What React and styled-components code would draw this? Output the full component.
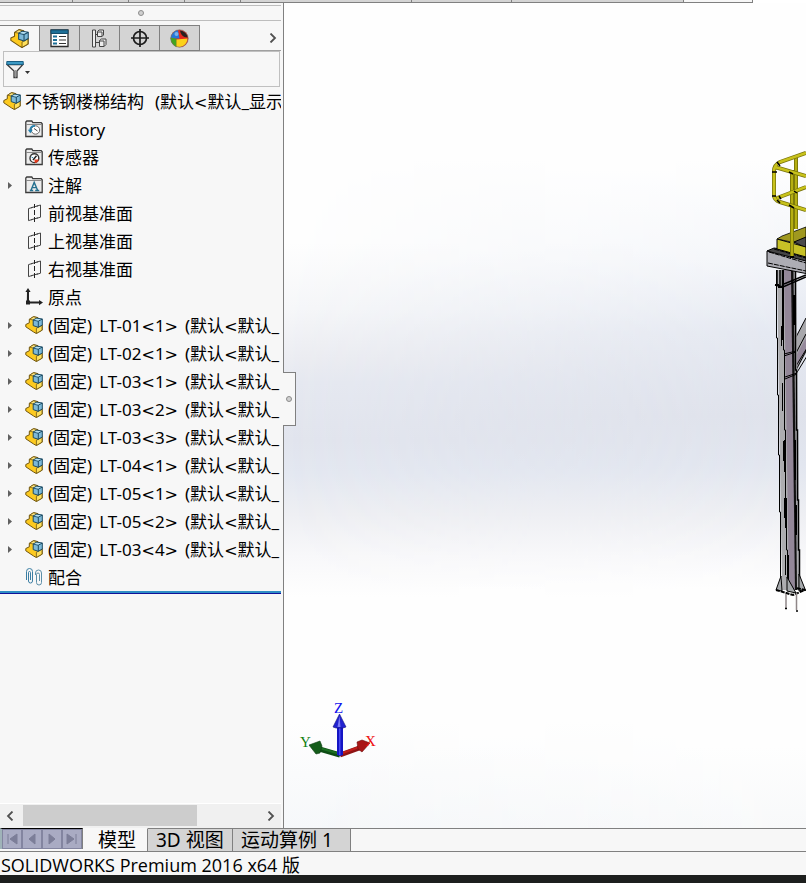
import React from "react";
import styled, { createGlobalStyle } from "styled-components";

const GlobalStyle = createGlobalStyle`
  * {
    box-sizing: border-box;
  }
  body {
    margin: 0;
    background: #f7f7f7;
    color: #000;
    font-family: "Noto Sans", "Noto Sans CJK SC", sans-serif;
    font-size: 17px;
  }
  button, input {
    font: inherit;
    color: inherit;
    margin: 0;
    padding: 0;
    border: 0;
    border-radius: 0;
    background: none;
  }
  svg {
    display: block;
    flex: none;
  }
`;

const Window = styled.div`
  display: flex;
  flex-direction: column;
  height: 100vh;
  min-height: 700px;
  overflow: hidden;
`;

const Ribbon = styled.div`
  display: flex;
  height: 3px;
  background: #fff;
`;

const RibbonTab = styled.div`
  width: ${(p) => p.$width}px;
  background: ${(p) => (p.$active ? "#f7f7f7" : "#d4d4d4")};
  border-right: 1px solid #808080;
  border-bottom: 1px solid #808080;
`;

const Main = styled.main`
  display: flex;
  flex: 1;
  min-height: 0;
`;

const Panel = styled.aside`
  position: relative;
  display: flex;
  flex-direction: column;
  flex: none;
  width: 284px;
  padding-right: 2px;
  border-right: 1px solid #808080;
  background: #f7f7f7;
`;

const Splitter = styled.div`
  display: flex;
  align-items: center;
  justify-content: center;
  height: 16px;
  margin-top: 2px;
  border-top: 1px solid #bdbdbd;
  border-bottom: 1px solid #bdbdbd;
`;

const Grip = styled.span`
  width: 6px;
  height: 6px;
  border: 1px solid #8c8c8c;
  border-radius: 50%;
  background: #d0d0d0;
`;

const PanelTabs = styled.div`
  display: flex;
  height: 26px;
  margin-top: 4px;
  border-bottom: 1px solid #a0a0a0;
`;

const PanelTab = styled.button`
  display: flex;
  align-items: center;
  justify-content: center;
  width: 40px;
  height: 26px;
  background: ${(p) => (p.$active ? "#f7f7f7" : "#d4d4d4")};
  border-top: 1px solid #808080;
  border-right: 1px solid #808080;
  border-bottom: ${(p) => (p.$active ? "0" : "1px solid #808080")};
`;

const MoreButton = styled.button`
  display: flex;
  align-items: center;
  justify-content: center;
  width: 16px;
  margin-left: auto;
`;

const FilterBar = styled.div`
  display: flex;
  align-items: center;
  height: 36px;
  margin: 0 1px 0 3px;
  border: 1px solid #c0c0c0;
`;

const FilterButton = styled.button`
  display: flex;
  align-items: center;
  gap: 1px;
  width: 28px;
  padding-left: 2px;
`;

const FilterInput = styled.input`
  flex: 1;
  min-width: 0;
  height: 30px;
  outline: none;
`;

const Tree = styled.ul`
  flex: 1;
  min-height: 0;
  margin: 0;
  padding: 0;
  overflow: hidden;
  list-style: none;
`;

const TreeRow = styled.li`
  display: flex;
  align-items: center;
  height: 28px;
  padding-left: ${(p) => (p.$root ? 3 : 0)}px;
  white-space: pre;
  overflow: hidden;
`;

const Expander = styled.button`
  display: flex;
  align-items: center;
  width: 25px;
  height: 28px;
  padding-left: 8px;
  flex: none;
`;

const Indent = styled.span`
  width: 25px;
  flex: none;
`;

const Label = styled.span`
  display: flex;
  gap: ${(p) => (p.$root ? 11 : 7)}px;
  padding-top: 2px;
  padding-left: ${(p) => (p.$root ? 4 : 5)}px;
  line-height: 28px;
`;

const Angle = styled.span`
  font-family: "DejaVu Sans", sans-serif;
  font-size: 16px;
  line-height: 1;
`;

const Rollback = styled.li`
  height: 3px;
  background: #2f8fc4;
  border-bottom: 1px solid #10109a;
`;

const ScrollBar = styled.div`
  display: flex;
  height: 25px;
  padding: 1px 0 2px;
  border-top: 1px solid #fff;
  background: #f0f0f0;
`;

const ScrollButton = styled.button`
  display: flex;
  align-items: center;
  justify-content: center;
  width: 20px;
`;

const ScrollTrack = styled.div`
  flex: 1;
  padding-left: 3px;
`;

const ScrollThumb = styled.div`
  width: 73%;
  height: 100%;
  background: #cdcdcd;
`;

const CollapseHandle = styled.button`
  position: absolute;
  top: 369px;
  left: 283px;
  z-index: 1;
  display: flex;
  align-items: center;
  justify-content: center;
  width: 13px;
  height: 54px;
  border: 1px solid #808080;
  border-left: 0;
  background: #f7f7f7;
`;

const Viewport = styled.section`
  position: relative;
  flex: 1;
  min-width: 0;
  overflow: hidden;
  background: linear-gradient(
    #fefefe 29%,
    #f6f7f9 37%,
    #ecedf2 43%,
    #e6e9f1 46%,
    #e2e5ee 53%,
    #e4e8f1 57%,
    #eeeff3 62%,
    #f8f8fa 67%,
    #fefefe 72%,
    #fefefe 87%,
    #f6f8fa 100%
  );

  &::before {
    content: "";
    position: absolute;
    inset: 0;
    background: linear-gradient(
      #fefefe 19%,
      #f3f5f9 31%,
      #e4e8f1 40%,
      #dfe2eb 50%,
      #e2e6ef 56%,
      #eeeff3 62%,
      #f8f8fa 67%,
      #fefefe 71%,
      #fefefe 90%,
      #f8f9fa 100%
    );
    mask-image: linear-gradient(to right, transparent, #000);
  }
`;

const Model = styled.svg`
  position: absolute;
  top: 137px;
  right: 0;
`;

const Triad = styled.svg`
  position: absolute;
  bottom: 58px;
  left: 6px;
  font-family: "Liberation Serif", serif;
  font-size: 15px;
`;

const BottomBar = styled.nav`
  display: flex;
  height: 24px;
  background: #f7f7f7;
  border-bottom: 1px solid #808080;
`;

const Recorder = styled.div`
  display: flex;
  height: 21px;
  width: 83px;
  border-top: 1px solid #000;
  border-left: 2px solid #9fb3b8;
  border-right: 1px solid #808080;
`;

const RecorderButton = styled.button`
  display: flex;
  align-items: center;
  justify-content: center;
  flex: 1;
  background: #a9abc3;
  border: 1px solid #8385a0;
`;

const ViewTab = styled.button`
  width: ${(p) => p.$width}px;
  padding-left: ${(p) => (p.$active ? 15 : 8)}px;
  background: ${(p) => (p.$active ? "#f7f7f7" : "#d4d4d4")};
  border-top: 1px solid ${(p) => (p.$active ? "#f7f7f7" : "#808080")};
  border-right: 1px solid #808080;
  font-size: 19px;
  line-height: 23px;
  text-align: left;
  white-space: nowrap;
`;

const BarFill = styled.div`
  flex: 1;
  border-top: 1px solid #808080;
`;

const StatusBar = styled.footer`
  height: 31px;
  padding-left: 1px;
  border-bottom: 8px solid #1d1f1e;
  background: #f7f7f7;
  font-family: "Open Sans", "Noto Sans CJK SC", sans-serif;
  font-size: 18px;
  line-height: 26px;
  white-space: nowrap;
`;

function PartIcon({ size = 18 }) {
  return (
    <svg width={size} height={size} viewBox="0 0 18 18" strokeLinejoin="round">
      <path d="M.8 8.500 4.300 6.800V3.300L8.500.6l4.500 1v8l4.200-.8v5.400L11.300 17.500 8.600 16 .8 10.800z" fill="#fdca1f" stroke="#6f5510" />
      <path d="M4.500 3.300 8.500.8l4 1L9 4z" fill="#fbe27d" stroke="#6f5510" strokeWidth=".7" />
      <path d="M11.400 12.300 17 9.200v5l-5.600 3.200z" fill="#ffe05c" stroke="#6f5510" strokeWidth=".8" />
      <path d="m8.200 4 3.400-1.800L17.300 3v6l-4 2.300L8.200 9.600z" fill="#7db9d8" stroke="#1b4a63" />
      <path d="m8.200 4 5.100 1.200v6M13.300 5.200 17.300 3" fill="none" stroke="#1b4a63" />
      <path d="m9.200 3.900 2.600-1.200 4 .5-2.600 1.300z" fill="#b7dff0" />
    </svg>
  );
}

function Folder({ children }) {
  return (
    <svg width="18" height="18" viewBox="0 0 18 18">
      <path d="M.8 16.500V2L1.800 1h5l1 1.600h8.400l1 1.200v12.700z" fill="#ececec" stroke="#3c3c3c" strokeWidth="1.300" />
      <path d="M1 4.500h16" stroke="#8a8a8a" />
      {children}
    </svg>
  );
}

function HistoryIcon() {
  return (
    <Folder>
      <circle cx="10.500" cy="10" r="4.200" fill="#fff" stroke="#666" />
      <path d="M9 8.500 12.500 11" fill="none" stroke="#444" />
      <path d="M10 5.800c-3.500 0-4.800 2-4.800 4.800" fill="none" stroke="#2580ad" strokeWidth="1.800" />
      <path d="M2.800 9.800h5L5.400 13.300z" fill="#2580ad" />
    </Folder>
  );
}

function SensorIcon() {
  return (
    <Folder>
      <circle cx="9.400" cy="10.200" r="4.400" fill="#fff" stroke="#333" strokeWidth="1.400" />
      <path d="M9.400 11.400h4.400a4.400 4.400 0 0 1-4 3.600z" fill="#e33b1d" />
      <path d="m8 12 3.500-4.200" stroke="#222" strokeWidth="1.500" />
      <path d="m6.500 9 1.800 1" stroke="#2580ad" />
    </Folder>
  );
}

function AnnotationIcon() {
  return (
    <Folder>
      <path d="M4.800 14.500h3.400M10.200 14.500h4M6 14.200 9.200 6.400l3.400 7.800M7.400 11.600h4" fill="none" stroke="#24708f" strokeWidth="1.400" />
    </Folder>
  );
}

function PlaneIcon() {
  return (
    <svg width="18" height="18" viewBox="0 0 18 18" fill="none" stroke="#444">
      <path d="M7.500 3.400 3.500 4.600v12l4-1.200M11.500 2.200l4-1.200v12.200l-4 1.200" />
      <path d="m6 3.800 7-2M6 15.800l7-2" />
      <path d="M9.500 0v4M9.500 6v5M9.500 13v5" stroke="#222" />
    </svg>
  );
}

function OriginIcon() {
  return (
    <svg width="18" height="18" viewBox="0 0 18 18" fill="#222">
      <path d="M2 3h2v10.500h10v2H1.800z" />
      <path d="m3 0 2.600 4H.4zM18 14.600l-4 2.600V12zM1 12.600h4v4H1z" />
    </svg>
  );
}

function MatesIcon() {
  return (
    <svg width="18" height="18" viewBox="0 0 18 18" fill="none" stroke="#3b7ea3">
      <path d="M1.500 12V3.500a3 3 0 0 1 6 0V13a2 2 0 0 1-4 0V4.500a1 1 0 0 1 2 0V12" />
      <path d="M10.500 7V5a3 3 0 0 1 6 0v9.500a2.500 2.500 0 0 1-5 0V6.500a1.500 1.500 0 0 1 3 0V13" stroke="#5d8fa8" />
    </svg>
  );
}

function PropertiesIcon() {
  return (
    <svg width="19" height="19" viewBox="0 0 19 19" fill="none">
      <path d="M1 1h17v16.500H1z" fill="#fff" stroke="#2c2c2c" strokeWidth="1.300" />
      <path d="M1 1h17v3.500H1z" fill="#1d6f97" stroke="#164d6a" />
      <path d="M3 7.500h4M3 11h4M3 14.500h4" stroke="#1d6f97" strokeWidth="2" />
      <path d="M9 7.500h7M9 11h7M9 14.500h7" stroke="#333" />
    </svg>
  );
}

function ConfigIcon() {
  return (
    <svg width="17" height="19" viewBox="0 0 17 19" fill="#ededed" stroke="#444">
      <path d="M1.500 1h3v17h-3z" />
      <path d="M4.500 5.500h2M4.500 13.500h4" fill="none" />
      <path d="M6.500 2.500 8 1h4.500v5L11 7.500H6.500z" />
      <path d="M6.500 3h4.500v4.500" fill="none" />
      <path d="M8.500 11.500 10.500 10H15v5.500L13 17.500H8.500z" />
      <path d="M8.500 12h4.500v5.500" fill="none" />
    </svg>
  );
}

function TargetIcon() {
  return (
    <svg width="20" height="20" viewBox="0 0 20 20" fill="none" stroke="#1c1c1c" strokeWidth="1.700">
      <circle cx="10" cy="10" r="6.500" />
      <path d="M10 1v18M1 10h18" />
    </svg>
  );
}

function AppearanceIcon() {
  return (
    <svg width="19" height="19" viewBox="0 0 19 19">
      <circle cx="9.500" cy="9.500" r="8.800" fill="#e5281d" />
      <path d="M9.500 9.500.7 9.500A8.800 8.800 0 0 1 8 .9z" fill="#2677d8" />
      <path d="M.7 8.500l6 1.500 0 8A8.800 8.800 0 0 1 .7 8.500z" fill="#43a51f" />
      <path d="M6.500 10.500 17.500 9.500A8.800 8.800 0 0 1 6.500 17.800z" fill="#fbd21b" />
      <path d="M10 1.500c3 0 7 3 8 7l-3.500-.5C12 7 10.500 4.500 10 1.500z" fill="#29201f" />
      <circle cx="6.500" cy="5" r="2" fill="#9cc8f5" opacity=".7" />
      <circle cx="9.500" cy="9.500" r="8.700" fill="none" stroke="#75706c" strokeWidth=".6" />
    </svg>
  );
}

function FunnelIcon() {
  return (
    <svg width="18" height="19" viewBox="0 0 18 19">
      <path d="M1 4.500h16L11 11v6.500H8V11z" fill="#f0f0f0" stroke="#3c3c3c" strokeWidth="1.300" />
      <path d="M9.500 10v7.500" stroke="#999" />
      <path d="M.8 1.500h16.400v3H.8z" fill="#3d9ac4" stroke="#1a5f83" />
    </svg>
  );
}

function Chevron({ left }) {
  return (
    <svg width="8" height="10" viewBox="0 0 8 10" fill="none" stroke="#505050" strokeWidth="1.800">
      <path d={left ? "M6.500 .5 2 5l4.500 4.500" : "M1.500 .5 6 5 1.500 9.500"} />
    </svg>
  );
}

// platform leg with the guard rail on top
function StairModel() {
  const rail = "M60 13 34 22Q28 25 28 31V55Q28 60 34 62L60 70M29 27 60 36M31 58 60 47";
  return (
    <Model width="60" height="480" viewBox="0 0 60 480" role="img" aria-label="不锈钢楼梯结构">
      {/* brace */}
      <path d="M50 197 60 178V213L50 232z" fill="#a8a8ac" />
      <path d="M50 216 60 198V210L50 228z" fill="#968a9c" />
      <path d="M50 197 60 178M50 213 60 194M50 230 60 211M50 234 61 216M50 226 61 208" stroke="#000" fill="none" />
      {/* column */}
      <path d="M31 130H50L54 450H36z" fill="#adadb0" />
      <path d="M38 130H46L50.500 450H43z" fill="#938798" />
      <path d="M45 130h2.500L51 450h-2z" fill="#111" />
      <path d="M30.500 130v68h1v57h1v60h1v57h1v78M37.500 130v80h1v80h1v70h1v50h1v40" fill="none" stroke="#000" />
      <path d="M49.500 130v100h1v60h1v70h1v50h1v40" fill="none" stroke="#000" strokeWidth="1.500" />
      <path d="M35.500 186v20M36.500 243v28M37.500 301v20M38.500 358v20M39.500 415v20" stroke="#000" />
      <path d="M37 130v70M39 300v32M40 358v30M42 415v25M48 155v30M49 300v40M50 365v30" stroke="#000" strokeWidth="2" />
      <path d="m38 214 12-3M38 216l12-4M39 239l12-5M39 237l12-4" stroke="#000" />
      {/* base plate and anchor bolts */}
      <path d="M35 436 30 450 36 451zM41 437v14l9 2zM53 434l6 15-6 2z" fill="#a5a8ab" stroke="#000" />
      <path d="m30 450 17 5 12-5-9-2" fill="none" stroke="#000" strokeWidth="2" strokeDasharray="4 1" />
      <path d="M40 454v14M50.500 453v17" stroke="#8f8688" strokeWidth="1.500" />
      <path d="M39 468.500h2M50 471h2" stroke="#000" strokeWidth="1.500" />
      {/* column head */}
      <path d="M31 130v14M34 130v16M36.500 130v16M29 145l8 2 23-10M38 144l22-9" fill="none" stroke="#000" strokeWidth="1.500" />
      <path d="M29 145h4M32 147h4" stroke="#000" strokeWidth="2" />
      {/* deck */}
      <path d="M21 111 28 108 60 113V126z" fill="#454545" stroke="#000" />
      <path d="M21 111 60 121V133.500L21 126z" fill="#adadb4" stroke="#000" />
      <path d="M23 112 60 123M22 123l38 8M28 109l32 9" stroke="#000" fill="none" strokeDasharray="5 1" />
      <path d="M31 99 36 96 60 87V98L50 103z" fill="#9f9820" stroke="#000" strokeWidth=".8" />
      <path d="M48 102 60 97V108z" fill="#4a4a4a" stroke="#000" />
      <path d="M31 99 60 107V117L31 109z" fill="#c7c126" stroke="#000" />
      {/* guard rail */}
      <g fill="none">
        <path d="M50 18V89M46 30V117" stroke="#6d6a08" strokeWidth="4" />
        <path d="M50 18V89M46 30V117" stroke="#b5ae12" strokeWidth="2.500" />
        <path d={rail} stroke="#77720c" strokeWidth="4" />
        <path d={rail} stroke="#c8c21b" strokeWidth="2.500" />
        <path d="M31 22l3 4M26 32h5M26 56h4M31 60l3 3M43 32l4 2M33 56l2 3M48 51l3 2M43 65l5 3" stroke="#000" strokeWidth="1.500" />
      </g>
      <path d="M44 117h4" stroke="#000" strokeWidth="2" />
    </Model>
  );
}

function AxisTriad() {
  return (
    <Triad width="100" height="80" viewBox="0 0 100 80">
      <path d="M50 65 26 58" stroke="#0e4d14" strokeWidth="5" />
      <path d="M50 64 26 57" stroke="#1c6f22" strokeWidth="2" />
      <path d="m19 55 11-4 2 5-2 7-4 1z" fill="#145c1a" stroke="#0c3d10" strokeWidth=".6" />
      <path d="m50 65 22-8" stroke="#8e1414" strokeWidth="5" />
      <path d="m50 64 22-8" stroke="#c01c1c" strokeWidth="2" />
      <path d="m80 53-8-3-5 2 1 7 4 3z" fill="#a81616" stroke="#6a0c0c" strokeWidth=".6" />
      <path d="M47 37h6v28l-3 1-3-1z" fill="#1414c4" />
      <path d="M49 37h1.500v28H49z" fill="#4848f0" />
      <path d="m49.500 24 6.500 13-3 1h-7l-3-1z" fill="#2222d0" stroke="#10107a" strokeWidth=".6" />
      <path d="m49.500 26 1 11h-3z" fill="#7c7cf4" />
      <text x="44" y="23" fill="#1010ee">Z</text>
      <text x="10" y="57" fill="#108010">Y</text>
      <text x="75" y="56" fill="#ee1010">X</text>
    </Triad>
  );
}

const ribbonTabs = [73, 56, 56, 56, 171, 100, 172];

const features = [
  { label: ["History"], icon: <HistoryIcon /> },
  { label: ["传感器"], icon: <SensorIcon /> },
  { label: ["注解"], icon: <AnnotationIcon />, expandable: true },
  { label: ["前视基准面"], icon: <PlaneIcon /> },
  { label: ["上视基准面"], icon: <PlaneIcon /> },
  { label: ["右视基准面"], icon: <PlaneIcon /> },
  { label: ["原点"], icon: <OriginIcon /> },
];

const parts = ["01<1>", "02<1>", "03<1>", "03<2>", "03<3>", "04<1>", "05<1>", "05<2>", "03<4>"].map((name) => ({
  label: ["(固定)", `LT-${name}`, "(默认<默认_"],
  icon: <PartIcon />,
  expandable: true,
}));

const items = [...features, ...parts, { label: ["配合"], icon: <MatesIcon /> }];

const panelTabs = [
  { name: "FeatureManager", icon: <PartIcon size={19} />, active: true },
  { name: "PropertyManager", icon: <PropertiesIcon /> },
  { name: "ConfigurationManager", icon: <ConfigIcon /> },
  { name: "DimXpertManager", icon: <TargetIcon /> },
  { name: "DisplayManager", icon: <AppearanceIcon /> },
];

const recorder = [
  { name: "first", d: "M2 1v10M11 1v10L4 6z" },
  { name: "previous", d: "M9 1v10L3 6z" },
  { name: "next", d: "M3 1v10l6-5z" },
  { name: "last", d: "M10 1v10M1 1v10l7-5z" },
];

function TreeLabel({ words, root }) {
  return (
    <Label $root={root}>
      {words.map((word) => (
        <span key={word}>
          {word.split(/([<>])/).map((s, i) => (s === "<" || s === ">" ? <Angle key={i}>{s}</Angle> : s))}
        </span>
      ))}
    </Label>
  );
}

function App() {
  return (
    <Window>
      <GlobalStyle />
      <Ribbon>
        {ribbonTabs.map((width, i) => (
          <RibbonTab key={i} $width={width} />
        ))}
        <RibbonTab $width={69} $active />
      </Ribbon>
      <Main>
        <Panel>
          <Splitter>
            <Grip />
          </Splitter>
          <PanelTabs>
            {panelTabs.map((tab) => (
              <PanelTab key={tab.name} aria-label={tab.name} $active={tab.active}>
                {tab.icon}
              </PanelTab>
            ))}
            <MoreButton aria-label="more">
              <Chevron />
            </MoreButton>
          </PanelTabs>
          <FilterBar>
            <FilterButton aria-label="filter">
              <FunnelIcon />
              <svg width="5" height="9" viewBox="0 0 5 9">
                <path d="M0 6h5L2.500 9z" fill="#333" />
              </svg>
            </FilterButton>
            <FilterInput type="text" aria-label="filter text" />
          </FilterBar>
          <Tree>
            <TreeRow $root>
              <PartIcon />
              <TreeLabel root words={["不锈钢楼梯结构", "(默认<默认_显示"]} />
            </TreeRow>
            {items.map((item) => (
              <TreeRow key={item.label.join(" ")}>
                {item.expandable ? (
                  <Expander aria-label={`expand ${item.label.join(" ")}`}>
                    <svg width="4" height="7" viewBox="0 0 4 7">
                      <path d="M0 0v7l4-3.500z" fill="#606060" />
                    </svg>
                  </Expander>
                ) : (
                  <Indent />
                )}
                {item.icon}
                <TreeLabel words={item.label} />
              </TreeRow>
            ))}
            <Rollback />
          </Tree>
          <ScrollBar>
            <ScrollButton aria-label="scroll left">
              <Chevron left />
            </ScrollButton>
            <ScrollTrack>
              <ScrollThumb />
            </ScrollTrack>
            <ScrollButton aria-label="scroll right">
              <Chevron />
            </ScrollButton>
          </ScrollBar>
          <CollapseHandle aria-label="collapse panel">
            <Grip />
          </CollapseHandle>
        </Panel>
        <Viewport>
          <StairModel />
          <AxisTriad />
        </Viewport>
      </Main>
      <BottomBar>
        <Recorder>
          {recorder.map((b) => (
            <RecorderButton key={b.name} aria-label={b.name}>
              <svg width="12" height="12" viewBox="0 0 12 12">
                <path d={b.d} fill="#7c7e98" stroke="#7c7e98" />
              </svg>
            </RecorderButton>
          ))}
        </Recorder>
        <ViewTab $width={65} $active>模型</ViewTab>
        <ViewTab $width={85}>3D 视图</ViewTab>
        <ViewTab $width={118}>运动算例 1</ViewTab>
        <BarFill />
      </BottomBar>
      <StatusBar>SOLIDWORKS Premium 2016 x64 版</StatusBar>
    </Window>
  );
}

export default App;
